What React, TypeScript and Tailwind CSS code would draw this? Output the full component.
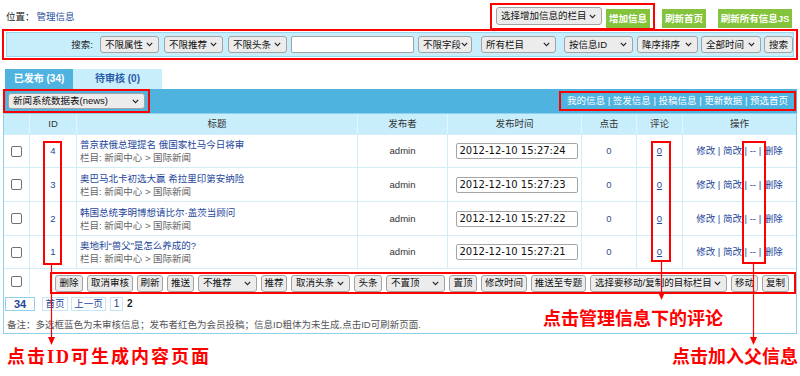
import React from 'react';

const ui = "font-['Liberation_Sans','Noto_Sans_CJK_SC',sans-serif]";
const mark = "font-['Liberation_Serif','Noto_Sans_CJK_SC',serif]";
const cols = 'grid grid-cols-[26px_47px_281px_90px_134px_55px_46px_113px]';

const rows = [
  { id: 4, title: '普京获俄总理提名 俄国家杜马今日将审', time: '2012-12-10 15:27:24', h: 'h-[33px]' },
  { id: 3, title: '奥巴马北卡初选大赢 希拉里印第安纳险', time: '2012-12-10 15:27:23', h: 'h-[34px]' },
  { id: 2, title: '韩国总统李明博想请比尔·盖茨当顾问', time: '2012-12-10 15:27:22', h: 'h-[34px]' },
  { id: 1, title: '奥地利“兽父”是怎么养成的?', time: '2012-12-10 15:27:21', h: 'h-[33px]' },
];

function Chevron() {
  return (
    <svg width="7" height="5" viewBox="0 0 7 5" className="shrink-0">
      <path d="M0.8 0.8 3.5 3.6 6.2 0.8" fill="none" stroke="#222" strokeWidth="1.1" />
    </svg>
  );
}

function Select({ label, className }: { label: string; className: string }) {
  return (
    <div
      className={`flex items-center justify-between rounded-[3px] border border-[#a3a3a3] bg-[#ececec] pl-[4px] pr-[5px] text-[#111] ${className}`}
    >
      <span className="whitespace-nowrap">{label}</span>
      <Chevron />
    </div>
  );
}

function Btn({ label, className }: { label: string; className: string }) {
  return (
    <div
      className={`flex h-[17px] items-center justify-center whitespace-nowrap rounded-[3px] border border-[#a3a3a3] bg-[#ececec] text-[#111] ${className}`}
    >
      {label}
    </div>
  );
}

function GreenBtn({ label, className }: { label: string; className: string }) {
  return (
    <div
      className={`flex h-[19px] items-center justify-center whitespace-nowrap bg-[#84c43c] font-bold text-white ${className}`}
    >
      {label}
    </div>
  );
}

function Check() {
  return <div className="h-[11px] w-[11px] rounded-[2px] border border-[#707070] bg-white" />;
}

export default function App() {
  return (
    <div className={`relative h-[376px] w-[800px] overflow-hidden bg-white text-[9.5px] leading-[12px] text-[#222] ${ui}`}>
      {/* top line */}
      <div className="flex h-[29px] justify-between">
        <div className="ml-[6px] mt-[11px] flex">
          位置：<span className="ml-[2px] text-[#1f4d9b]">管理信息</span>
        </div>
        <div className="mr-[8px] mt-[3px] flex items-start">
          <div className="flex h-[27px] w-[165px] items-start gap-[4px] border-2 border-[#f00] pl-[4px]">
            <Select label="选择增加信息的栏目" className="mt-[2px] h-[18px] w-[106px]" />
            <GreenBtn label="增加信息" className="mt-[4px] w-[44px]" />
          </div>
          <GreenBtn label="刷新首页" className="ml-[7px] mt-[6px] w-[44px]" />
          <GreenBtn label="刷新所有信息JS" className="ml-[12px] mt-[6px] w-[74px]" />
        </div>
      </div>

      {/* search */}
      <div className="mx-[2px] h-[31px] border-2 border-[#f00] px-[2px] py-[1px]">
        <div className="flex h-full items-center justify-end border border-[#9ad6ef] bg-[#c8eefc] text-[#222]">
          <span className="mr-[7px]">搜索:</span>
          <Select label="不限属性" className="h-[17px] w-[59px]" />
          <Select label="不限推荐" className="ml-[5px] h-[17px] w-[59px]" />
          <Select label="不限头条" className="ml-[5px] h-[17px] w-[59px]" />
          <div className="ml-[4px] h-[17px] w-[123px] rounded-[2px] border border-[#a3a3a3] bg-white" />
          <Select label="不限字段" className="ml-[4px] h-[17px] w-[54px]" />
          <Select label="所有栏目" className="ml-[9px] h-[17px] w-[75px]" />
          <Select label="按信息ID" className="ml-[8px] h-[17px] w-[69px]" />
          <Select label="降序排序" className="ml-[4px] h-[17px] w-[61px]" />
          <Select label="全部时间" className="ml-[3px] h-[17px] w-[60px]" />
          <Btn label="搜索" className="ml-[3px] w-[29px]" />
        </div>
      </div>

      {/* tabs */}
      <div className="ml-[5px] mt-[9px] flex h-[20px] text-[10px] font-bold">
        <div className="flex w-[68px] items-center justify-center bg-[#4fb3df] text-white">已发布 (34)</div>
        <div className="flex w-[89px] items-center justify-center bg-[#c8eefc] text-[#2a5ca8]">待审核 (0)</div>
      </div>

      {/* blue bar */}
      <div className="mx-[3px] flex h-[24px] items-center justify-between bg-[#4fb3df]">
        <div className="flex h-[24px] w-[147px] items-center border-2 border-[#f00] pl-[3px]">
          <Select label="新闻系统数据表(news)" className="h-[16px] w-[137px]" />
        </div>
        <div className="mr-[1px] flex h-[20px] w-[237px] items-center justify-center border-2 border-[#f00] text-white">
          我的信息 | 签发信息 | 投稿信息 | 更新数据 | 预选首页
        </div>
      </div>

      {/* list panel */}
      <div className="mx-[3px] h-[221px] border border-[#8fd0ec]">
        <div className={`${cols} h-[21px] border-b border-[#d3edf8] bg-[#c8eefc] text-[#333]`}>
          <div className="border-r border-[#e4f6fd]" />
          <div className="flex items-center justify-center border-r border-[#e4f6fd]">ID</div>
          <div className="flex items-center justify-center border-r border-[#e4f6fd]">标题</div>
          <div className="flex items-center justify-center border-r border-[#e4f6fd]">发布者</div>
          <div className="flex items-center justify-center border-r border-[#e4f6fd]">发布时间</div>
          <div className="flex items-center justify-center border-r border-[#e4f6fd]">点击</div>
          <div className="flex items-center justify-center border-r border-[#e4f6fd]">评论</div>
          <div className="flex items-center justify-center">操作</div>
        </div>

        {rows.map((r) => (
          <div key={r.id} className={`${cols} ${r.h} border-b border-[#d3edf8]`}>
            <div className="flex items-center justify-center border-r border-[#d3edf8]">
              <Check />
            </div>
            <div className="flex items-center justify-center border-r border-[#d3edf8] text-[#24469b]">{r.id}</div>
            <div className="flex flex-col justify-center border-r border-[#d3edf8] pl-[3px] leading-[13px]">
              <span className="text-[#24469b]">{r.title}</span>
              <span className="text-[#666]">栏目: 新闻中心 &gt; 国际新闻</span>
            </div>
            <div className="flex items-center justify-center border-r border-[#d3edf8] text-[#333]">admin</div>
            <div className="flex items-center justify-center border-r border-[#d3edf8] pl-[4px]">
              <div className="flex h-[16px] w-[122px] items-center rounded-[2px] border border-[#a5a5a5] bg-white pl-[3px] font-['DejaVu_Sans',sans-serif] text-[10px] text-[#111]">
                {r.time}
              </div>
            </div>
            <div className="flex items-center justify-center border-r border-[#d3edf8] text-[#3a4a8f]">0</div>
            <div className="flex items-center justify-center border-r border-[#d3edf8] text-[#24469b] underline">0</div>
            <div className="flex items-center justify-center whitespace-nowrap text-[#24469b]">
              修改 | 简改 | -- | 删除
            </div>
          </div>
        ))}

        {/* batch actions */}
        <div className="flex h-[25px]">
          <div className="flex w-[26px] items-center justify-center border-r border-[#d3edf8]">
            <Check />
          </div>
          <div className="ml-[20px] mt-[3px] flex h-[22px] flex-1 items-center gap-[4px] border-2 border-[#f00] pl-[3px]">
            <Btn label="删除" className="w-[28px]" />
            <Btn label="取消审核" className="w-[46px]" />
            <Btn label="刷新" className="w-[26px]" />
            <Btn label="推送" className="w-[27px]" />
            <Select label="不推荐" className="h-[17px] w-[59px]" />
            <Btn label="推荐" className="w-[26px]" />
            <Select label="取消头条" className="h-[17px] w-[59px]" />
            <Btn label="头条" className="w-[28px]" />
            <Select label="不置顶" className="h-[17px] w-[59px]" />
            <Btn label="置顶" className="w-[28px]" />
            <Btn label="修改时间" className="w-[46px]" />
            <Btn label="推送至专题" className="w-[55px]" />
            <Select label="选择要移动/复制的目标栏目" className="h-[17px] w-[137px]" />
            <Btn label="移动" className="w-[27px]" />
            <Btn label="复制" className="w-[27px]" />
          </div>
        </div>

        {/* pages */}
        <div className="flex h-[17px] items-end pl-[1px]">
          <div className="flex h-[14px] w-[30px] items-center justify-center border border-[#8fd0ec] text-[11px] font-bold text-[#24469b]">34</div>
          <div className="ml-[7px] flex h-[14px] w-[26px] items-center justify-center border border-[#c5e6f4] text-[#24469b]">首页</div>
          <div className="ml-[3px] flex h-[14px] w-[35px] items-center justify-center border border-[#c5e6f4] text-[#24469b]">上一页</div>
          <div className="ml-[4px] flex h-[14px] w-[13px] items-center justify-center border border-[#c5e6f4] text-[10px] text-[#24469b]">1</div>
          <div className="ml-[4px] flex h-[14px] items-center text-[10px] font-bold">2</div>
        </div>

        <div className="pl-[3px] pt-[8px] text-[#555]">
          备注：多选框蓝色为未审核信息；发布者红色为会员投稿；信息ID粗体为未生成,点击ID可刷新页面.
        </div>
      </div>

      {/* annotation overlays */}
      <div className="pointer-events-none absolute left-[43px] top-[141px] h-[124px] w-[19px] border-2 border-[#f00]" />
      <div className="pointer-events-none absolute left-[651px] top-[141px] h-[121px] w-[20px] border-2 border-[#f00]" />
      <div className="pointer-events-none absolute left-[742px] top-[141px] h-[123px] w-[24px] border-2 border-[#f00]" />
      <svg className="pointer-events-none absolute left-0 top-0" width="800" height="376" viewBox="0 0 800 376">
        <line x1="51.5" y1="265" x2="51.5" y2="339" stroke="#f00" strokeWidth="1.2" />
        <polygon points="48,337 55,337 51.5,345" fill="#f00" />
        <line x1="661.5" y1="262" x2="661.5" y2="294" stroke="#f00" strokeWidth="1.2" />
        <polygon points="658,292 665,292 661.5,300" fill="#f00" />
        <line x1="753.5" y1="264" x2="753.5" y2="339" stroke="#f00" strokeWidth="1.2" />
        <polygon points="750,337 757,337 753.5,345" fill="#f00" />
      </svg>
      <div className={`absolute left-[7px] top-[347px] whitespace-nowrap text-[18px] font-bold leading-[20px] tracking-[2px] text-[#f00] ${mark}`}>
        点击ID可生成内容页面
      </div>
      <div className={`absolute left-[543px] top-[309px] whitespace-nowrap text-[18px] font-bold leading-[20px] text-[#f00] ${mark}`}>
        点击管理信息下的评论
      </div>
      <div className={`absolute left-[672px] top-[347px] whitespace-nowrap text-[18px] font-bold leading-[20px] text-[#f00] ${mark}`}>
        点击加入父信息
      </div>
    </div>
  );
}
